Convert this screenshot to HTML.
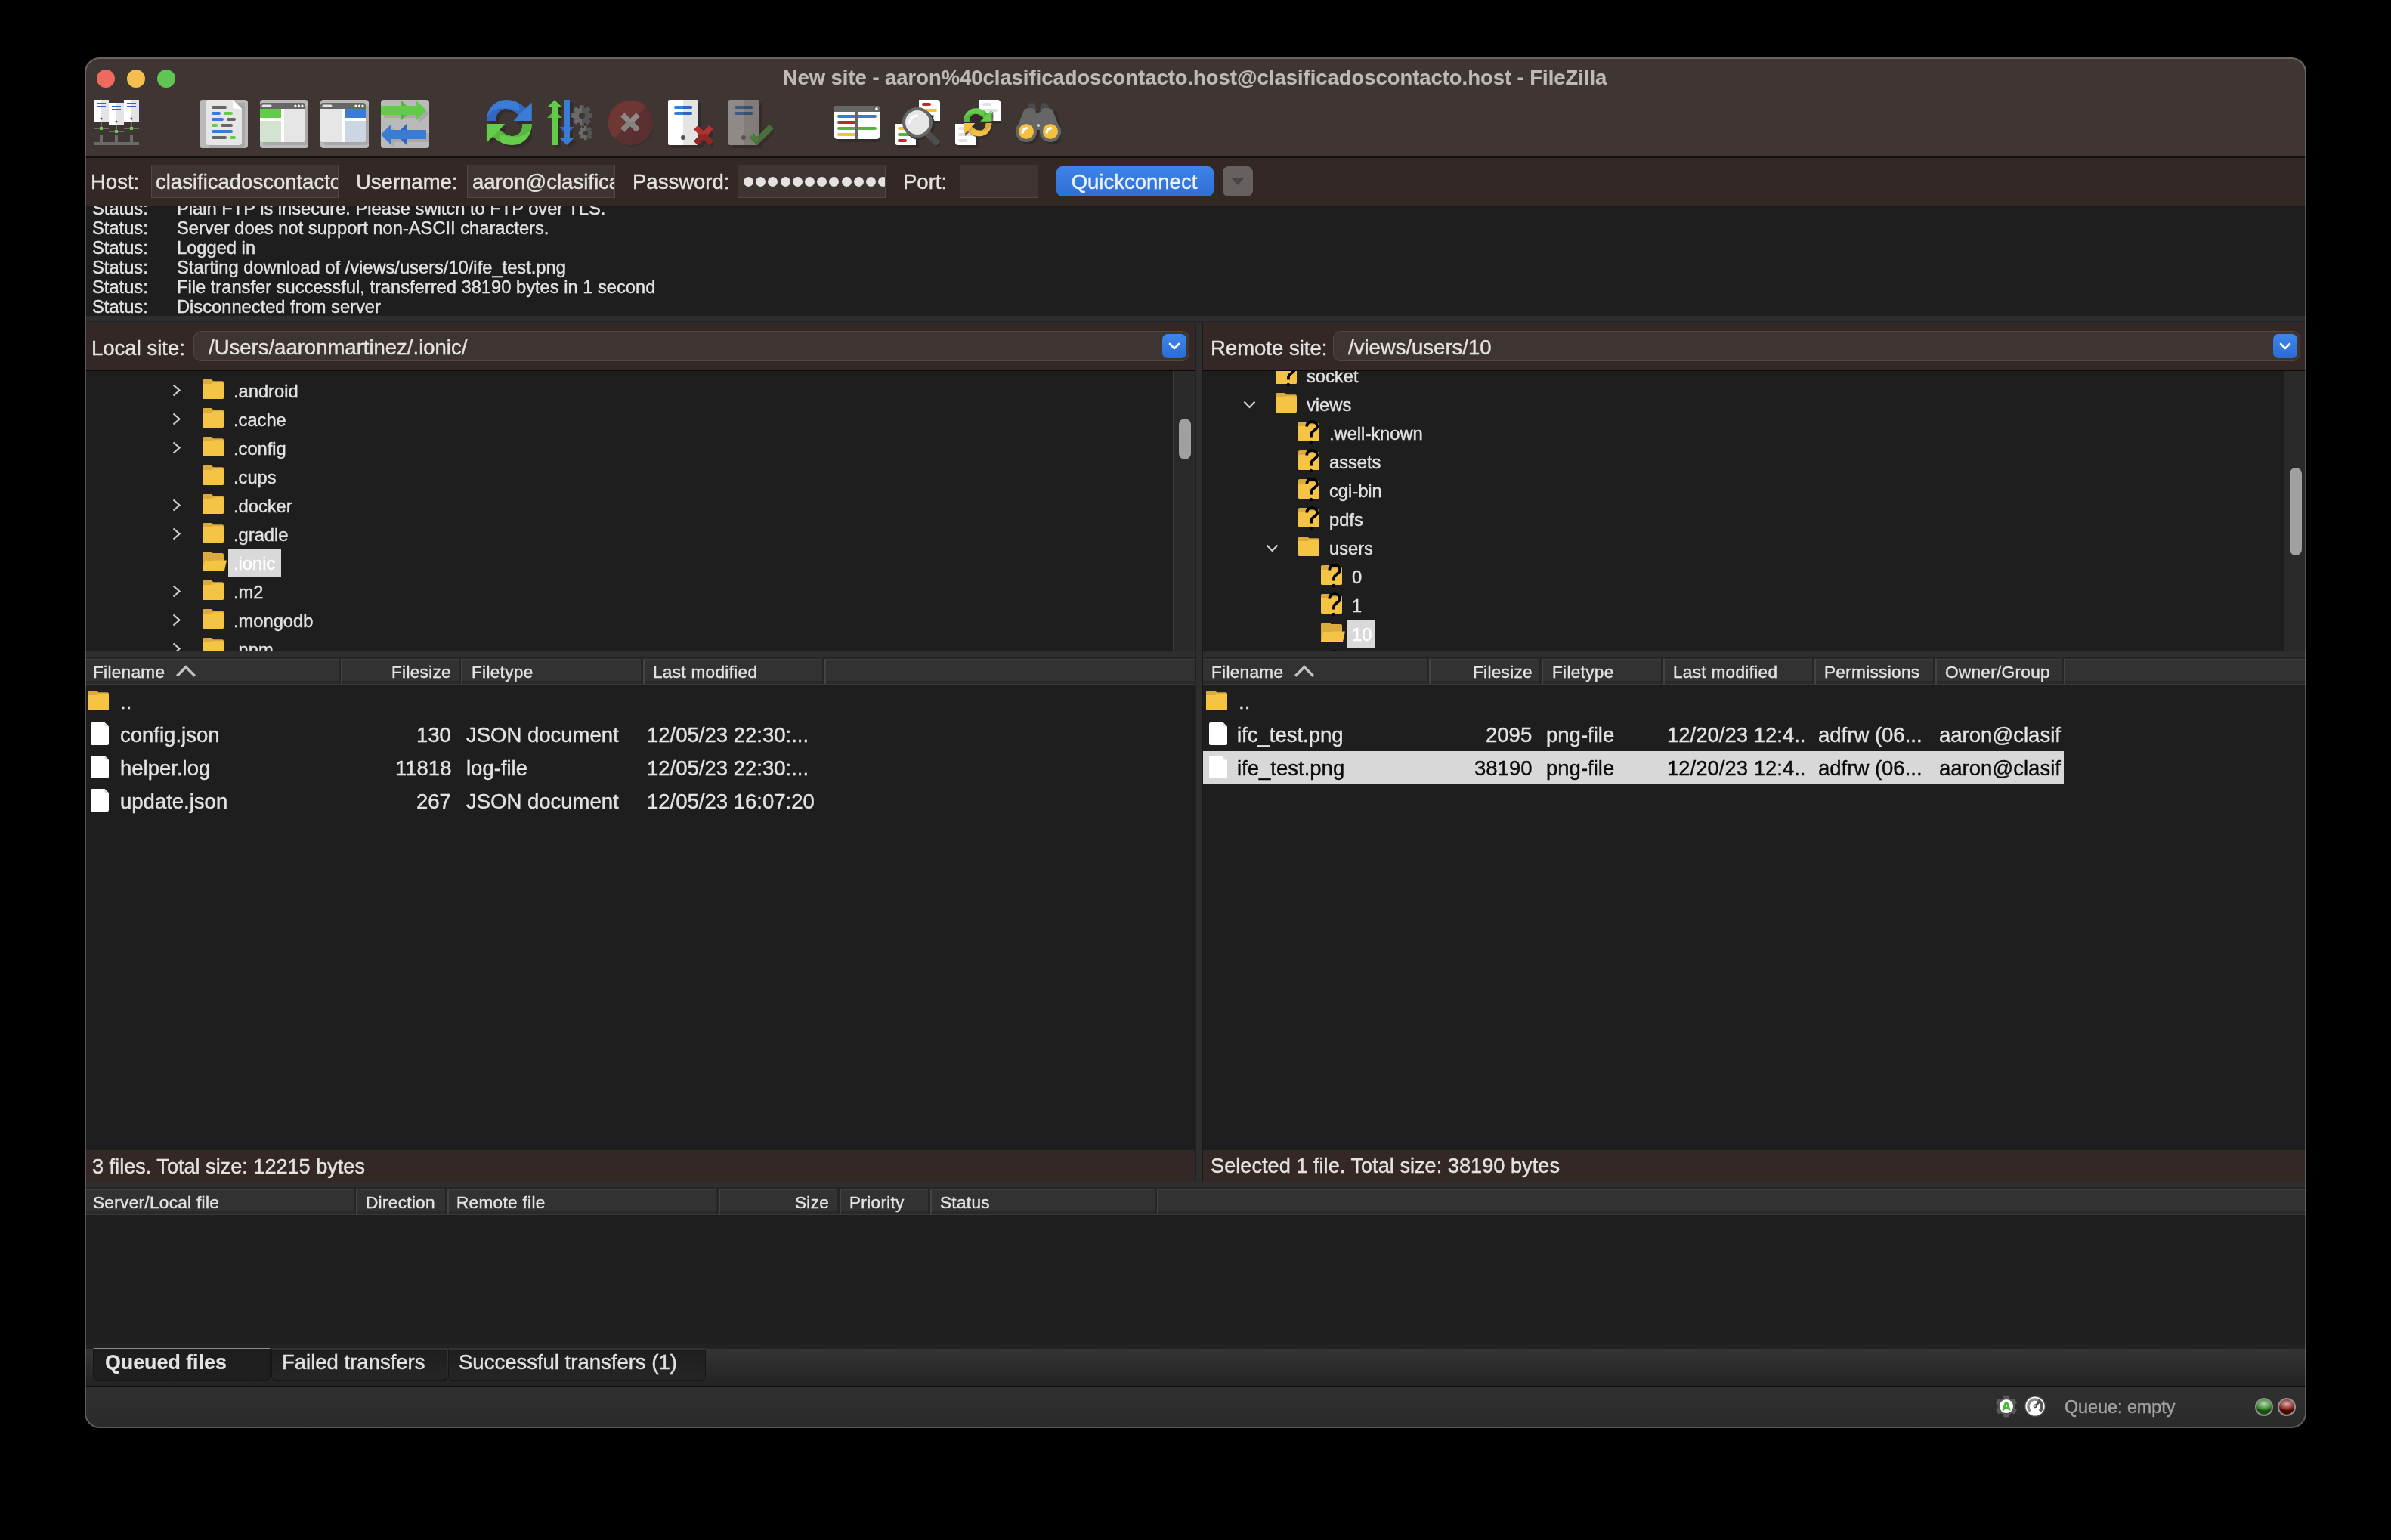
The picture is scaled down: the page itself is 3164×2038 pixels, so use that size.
<!DOCTYPE html>
<html><head><meta charset="utf-8"><style>
html,body{margin:0;padding:0;background:#000;width:3164px;height:2038px;overflow:hidden;font-family:'Liberation Sans', sans-serif;}
</style></head><body>
<div id="win" style="position:absolute;left:0;top:0;width:3164px;height:2038px;clip-path:inset(76px 112px 148px 112px round 20px);"><div style="position:absolute;left:112px;top:76px;width:2940px;height:132px;background:#3f3634;"></div><div style="position:absolute;left:112px;top:207px;width:2940px;height:2px;background:#121010;"></div><div style="position:absolute;left:112px;top:209px;width:2940px;height:63px;background:#332826;"></div><div style="position:absolute;left:112px;top:272px;width:2940px;height:146px;background:#1e1e1e;"></div><div style="position:absolute;left:112px;top:418px;width:2940px;height:10px;background:#2e2e2e;"></div><div style="position:absolute;left:112px;top:425px;width:2940px;height:3px;background:#262626;"></div><div style="position:absolute;left:112px;top:428px;width:1469px;height:61px;background:#332826;"></div><div style="position:absolute;left:1592px;top:428px;width:1460px;height:61px;background:#332826;"></div><div style="position:absolute;left:112px;top:489px;width:1469px;height:2px;background:#0a0a0a;"></div><div style="position:absolute;left:1592px;top:489px;width:1460px;height:2px;background:#0a0a0a;"></div><div style="position:absolute;left:112px;top:491px;width:1469px;height:371px;background:#1e1e1e;"></div><div style="position:absolute;left:1592px;top:491px;width:1460px;height:371px;background:#1e1e1e;"></div><div style="position:absolute;left:112px;top:862px;width:1469px;height:10px;background:#2e2e2e;"></div><div style="position:absolute;left:1592px;top:862px;width:1460px;height:10px;background:#2e2e2e;"></div><div style="position:absolute;left:112px;top:869px;width:1469px;height:3px;background:#262626;"></div><div style="position:absolute;left:1592px;top:869px;width:1460px;height:3px;background:#262626;"></div><div style="position:absolute;left:112px;top:872px;width:1469px;height:34px;background:#323232;"></div><div style="position:absolute;left:1592px;top:872px;width:1460px;height:34px;background:#323232;"></div><div style="position:absolute;left:112px;top:906px;width:1469px;height:616px;background:#1e1e1e;"></div><div style="position:absolute;left:1592px;top:906px;width:1460px;height:616px;background:#1e1e1e;"></div><div style="position:absolute;left:112px;top:1522px;width:1469px;height:42px;background:#332826;"></div><div style="position:absolute;left:1592px;top:1522px;width:1460px;height:42px;background:#332826;"></div><div style="position:absolute;left:1581px;top:427px;width:11px;height:1137px;background:#2e2e2e;"></div><div style="position:absolute;left:1581px;top:427px;width:2px;height:1137px;background:#222;"></div><div style="position:absolute;left:1590px;top:427px;width:2px;height:1137px;background:#1a1a1a;"></div><div style="position:absolute;left:112px;top:1564px;width:2940px;height:10px;background:#2e2e2e;"></div><div style="position:absolute;left:112px;top:1571px;width:2940px;height:3px;background:#262626;"></div><div style="position:absolute;left:112px;top:1574px;width:2940px;height:34px;background:#323232;"></div><div style="position:absolute;left:112px;top:1608px;width:2940px;height:171px;background:#1e1e1e;"></div><div style="position:absolute;left:112px;top:1779px;width:2940px;height:6px;background:#222222;"></div><div style="position:absolute;left:112px;top:1785px;width:2940px;height:50px;background:linear-gradient(#353535,#222222);"></div><div style="position:absolute;left:112px;top:1835px;width:2940px;height:55px;background:linear-gradient(#303030,#2a2a2a);"></div><div style="position:absolute;left:112px;top:1834px;width:2940px;height:2px;background:#0e0e0e;"></div><div style="position:absolute;left:581px;width:2000px;text-align:center;top:103.41px;font-size:27.4px;font-weight:700;color:#c0b9b6;letter-spacing:0px;line-height:0;white-space:pre;will-change:transform;-webkit-text-stroke-width:0.15px;">New site - aaron%40clasificadoscontacto.host@clasificadoscontacto.host - FileZilla</div><div style="position:absolute;left:128px;top:92px;width:24px;height:24px;border-radius:50%;background:#ee6a5f"></div><div style="position:absolute;left:168px;top:92px;width:24px;height:24px;border-radius:50%;background:#f5bf4f"></div><div style="position:absolute;left:208px;top:92px;width:24px;height:24px;border-radius:50%;background:#61c554"></div><div style="position:absolute;left:120px;top:241.38px;font-size:27.5px;font-weight:400;color:#e5e3e1;letter-spacing:0px;line-height:0;white-space:pre;will-change:transform;-webkit-text-stroke-width:0.4px;">Host:</div><div style="position:absolute;left:200px;top:218px;width:246px;height:42px;background:#3e3533;border:1px solid #4f4745;border-radius:0px"></div><div style="position:absolute;left:201px;top:219px;width:246px;height:42px;overflow:hidden"><div style="position:absolute;left:4.6px;top:22.38px;font-size:27.5px;font-weight:400;color:#e5e3e1;letter-spacing:0px;line-height:0;white-space:pre;will-change:transform;-webkit-text-stroke-width:0.4px;">clasificadoscontacto.host</div></div><div style="position:absolute;left:471px;top:241.38px;font-size:27.5px;font-weight:400;color:#e5e3e1;letter-spacing:0px;line-height:0;white-space:pre;will-change:transform;-webkit-text-stroke-width:0.4px;">Username:</div><div style="position:absolute;left:618px;top:218px;width:194px;height:42px;background:#3e3533;border:1px solid #4f4745;border-radius:0px"></div><div style="position:absolute;left:619px;top:219px;width:194px;height:42px;overflow:hidden"><div style="position:absolute;left:6px;top:22.38px;font-size:27.5px;font-weight:400;color:#e5e3e1;letter-spacing:0px;line-height:0;white-space:pre;will-change:transform;-webkit-text-stroke-width:0.4px;">aaron@clasificadoscontacto.host</div></div><div style="position:absolute;left:837px;top:241.38px;font-size:27.5px;font-weight:400;color:#e5e3e1;letter-spacing:0px;line-height:0;white-space:pre;will-change:transform;-webkit-text-stroke-width:0.4px;">Password:</div><div style="position:absolute;left:976px;top:218px;width:194px;height:42px;background:#3e3533;border:1px solid #4f4745;border-radius:0px"></div><div style="position:absolute;left:977px;top:219px;width:194px;height:42px;overflow:hidden"><div style="position:absolute;left:7.0px;top:15px;width:13px;height:13px;border-radius:50%;background:#e5e3e1"></div><div style="position:absolute;left:23.2px;top:15px;width:13px;height:13px;border-radius:50%;background:#e5e3e1"></div><div style="position:absolute;left:39.4px;top:15px;width:13px;height:13px;border-radius:50%;background:#e5e3e1"></div><div style="position:absolute;left:55.6px;top:15px;width:13px;height:13px;border-radius:50%;background:#e5e3e1"></div><div style="position:absolute;left:71.8px;top:15px;width:13px;height:13px;border-radius:50%;background:#e5e3e1"></div><div style="position:absolute;left:88.0px;top:15px;width:13px;height:13px;border-radius:50%;background:#e5e3e1"></div><div style="position:absolute;left:104.2px;top:15px;width:13px;height:13px;border-radius:50%;background:#e5e3e1"></div><div style="position:absolute;left:120.4px;top:15px;width:13px;height:13px;border-radius:50%;background:#e5e3e1"></div><div style="position:absolute;left:136.6px;top:15px;width:13px;height:13px;border-radius:50%;background:#e5e3e1"></div><div style="position:absolute;left:152.8px;top:15px;width:13px;height:13px;border-radius:50%;background:#e5e3e1"></div><div style="position:absolute;left:169.0px;top:15px;width:13px;height:13px;border-radius:50%;background:#e5e3e1"></div><div style="position:absolute;left:185.2px;top:15px;width:13px;height:13px;border-radius:50%;background:#e5e3e1"></div><div style="position:absolute;left:201.4px;top:15px;width:13px;height:13px;border-radius:50%;background:#e5e3e1"></div></div><div style="position:absolute;left:1195px;top:241.38px;font-size:27.5px;font-weight:400;color:#e5e3e1;letter-spacing:0px;line-height:0;white-space:pre;will-change:transform;-webkit-text-stroke-width:0.4px;">Port:</div><div style="position:absolute;left:1270px;top:218px;width:102px;height:42px;background:#3e3533;border:1px solid #4f4745;border-radius:0px"></div><div style="position:absolute;left:1398px;top:220px;width:208px;height:40px;border-radius:8px;background:linear-gradient(#3d83e8,#2f6fd6);"></div><div style="position:absolute;left:501px;width:2000px;text-align:center;top:241.38px;font-size:27.5px;font-weight:400;color:#eef2fa;letter-spacing:0px;line-height:0;white-space:pre;will-change:transform;-webkit-text-stroke-width:0.4px;">Quickconnect</div><div style="position:absolute;left:1618px;top:220px;width:40px;height:40px;border-radius:8px;background:#66615e;"></div><svg style="position:absolute;left:1628px;top:234px" width="20" height="12" viewBox="0 0 20 12"><path d="M1,1 L19,1 L10,11 Z" fill="#484544"/></svg><div style="position:absolute;left:0;top:272px;width:3164px;height:146px;overflow:hidden"><div style="position:absolute;left:122px;top:3.71px;font-size:23.7px;font-weight:400;color:#e3e3e3;letter-spacing:0px;line-height:0;white-space:pre;will-change:transform;-webkit-text-stroke-width:0.4px;">Status:</div><div style="position:absolute;left:234px;top:3.71px;font-size:23.7px;font-weight:400;color:#e3e3e3;letter-spacing:0px;line-height:0;white-space:pre;will-change:transform;-webkit-text-stroke-width:0.4px;">Plain FTP is insecure. Please switch to FTP over TLS.</div><div style="position:absolute;left:122px;top:29.70px;font-size:23.7px;font-weight:400;color:#e3e3e3;letter-spacing:0px;line-height:0;white-space:pre;will-change:transform;-webkit-text-stroke-width:0.4px;">Status:</div><div style="position:absolute;left:234px;top:29.70px;font-size:23.7px;font-weight:400;color:#e3e3e3;letter-spacing:0px;line-height:0;white-space:pre;will-change:transform;-webkit-text-stroke-width:0.4px;">Server does not support non-ASCII characters.</div><div style="position:absolute;left:122px;top:55.70px;font-size:23.7px;font-weight:400;color:#e3e3e3;letter-spacing:0px;line-height:0;white-space:pre;will-change:transform;-webkit-text-stroke-width:0.4px;">Status:</div><div style="position:absolute;left:234px;top:55.70px;font-size:23.7px;font-weight:400;color:#e3e3e3;letter-spacing:0px;line-height:0;white-space:pre;will-change:transform;-webkit-text-stroke-width:0.4px;">Logged in</div><div style="position:absolute;left:122px;top:81.70px;font-size:23.7px;font-weight:400;color:#e3e3e3;letter-spacing:0px;line-height:0;white-space:pre;will-change:transform;-webkit-text-stroke-width:0.4px;">Status:</div><div style="position:absolute;left:234px;top:81.70px;font-size:23.7px;font-weight:400;color:#e3e3e3;letter-spacing:0px;line-height:0;white-space:pre;will-change:transform;-webkit-text-stroke-width:0.4px;">Starting download of /views/users/10/ife_test.png</div><div style="position:absolute;left:122px;top:107.70px;font-size:23.7px;font-weight:400;color:#e3e3e3;letter-spacing:0px;line-height:0;white-space:pre;will-change:transform;-webkit-text-stroke-width:0.4px;">Status:</div><div style="position:absolute;left:234px;top:107.70px;font-size:23.7px;font-weight:400;color:#e3e3e3;letter-spacing:0px;line-height:0;white-space:pre;will-change:transform;-webkit-text-stroke-width:0.4px;">File transfer successful, transferred 38190 bytes in 1 second</div><div style="position:absolute;left:122px;top:133.71px;font-size:23.7px;font-weight:400;color:#e3e3e3;letter-spacing:0px;line-height:0;white-space:pre;will-change:transform;-webkit-text-stroke-width:0.4px;">Status:</div><div style="position:absolute;left:234px;top:133.71px;font-size:23.7px;font-weight:400;color:#e3e3e3;letter-spacing:0px;line-height:0;white-space:pre;will-change:transform;-webkit-text-stroke-width:0.4px;">Disconnected from server</div></div><div style="position:absolute;left:121px;top:460.88px;font-size:27.5px;font-weight:400;color:#e5e3e1;letter-spacing:0px;line-height:0;white-space:pre;will-change:transform;-webkit-text-stroke-width:0.4px;">Local site:</div><div style="position:absolute;left:256px;top:438px;width:1316px;height:38px;background:#3e3533;border:1px solid #4f4745;border-radius:10px"></div><div style="position:absolute;left:276px;top:459.57px;font-size:27.5px;font-weight:400;color:#e5e3e1;letter-spacing:0px;line-height:0;white-space:pre;will-change:transform;-webkit-text-stroke-width:0.4px;">/Users/aaronmartinez/.ionic/</div><div style="position:absolute;left:1538px;top:442px;width:32px;height:32px;border-radius:7px;background:linear-gradient(#3f86ea,#2d6bd2)"></div><svg style="position:absolute;left:1546px;top:453px" width="16" height="10" viewBox="0 0 16 10"><path d="M2,2 L8,8 L14,2" stroke="#fff" stroke-width="2.6" fill="none" stroke-linecap="round" stroke-linejoin="round"/></svg><div style="position:absolute;left:1602px;top:460.88px;font-size:27.5px;font-weight:400;color:#e5e3e1;letter-spacing:0px;line-height:0;white-space:pre;will-change:transform;-webkit-text-stroke-width:0.4px;">Remote site:</div><div style="position:absolute;left:1764px;top:438px;width:1278px;height:38px;background:#3e3533;border:1px solid #4f4745;border-radius:10px"></div><div style="position:absolute;left:1784px;top:459.57px;font-size:27.5px;font-weight:400;color:#e5e3e1;letter-spacing:0px;line-height:0;white-space:pre;will-change:transform;-webkit-text-stroke-width:0.4px;">/views/users/10</div><div style="position:absolute;left:3008px;top:442px;width:32px;height:32px;border-radius:7px;background:linear-gradient(#3f86ea,#2d6bd2)"></div><svg style="position:absolute;left:3016px;top:453px" width="16" height="10" viewBox="0 0 16 10"><path d="M2,2 L8,8 L14,2" stroke="#fff" stroke-width="2.6" fill="none" stroke-linecap="round" stroke-linejoin="round"/></svg><div style="position:absolute;left:112px;top:491px;width:1440px;height:371px;overflow:hidden"><svg style="position:absolute;left:116px;top:17px" width="12" height="18" viewBox="0 0 12 18"><path d="M1.5,1.5 L9.5,8.5 L1.5,15.5" stroke="#d0d0d0" stroke-width="2.2" fill="none"/></svg><svg style="position:absolute;left:156px;top:11px" width="32" height="26" viewBox="0 0 32 26"><path d="M0,2 Q0,0 2,0 L11.5,0 L14.5,2.2 L26,2.2 Q28,2.2 28,4.2 L28,24 Q28,26 26,26 L2,26 Q0,26 0,24 Z" fill="#dcab3d"/><path d="M0,6 L11.5,6 L14.5,4.2 L26,4.2 Q28,4.2 28,6.2 L28,24 Q28,26 26,26 L2,26 Q0,26 0,24 Z" fill="#f5c445"/></svg><div style="position:absolute;left:197px;top:26.70px;font-size:23.7px;font-weight:400;color:#e3e3e3;letter-spacing:0px;line-height:0;white-space:pre;will-change:transform;-webkit-text-stroke-width:0.4px;">.android</div><svg style="position:absolute;left:116px;top:55px" width="12" height="18" viewBox="0 0 12 18"><path d="M1.5,1.5 L9.5,8.5 L1.5,15.5" stroke="#d0d0d0" stroke-width="2.2" fill="none"/></svg><svg style="position:absolute;left:156px;top:49px" width="32" height="26" viewBox="0 0 32 26"><path d="M0,2 Q0,0 2,0 L11.5,0 L14.5,2.2 L26,2.2 Q28,2.2 28,4.2 L28,24 Q28,26 26,26 L2,26 Q0,26 0,24 Z" fill="#dcab3d"/><path d="M0,6 L11.5,6 L14.5,4.2 L26,4.2 Q28,4.2 28,6.2 L28,24 Q28,26 26,26 L2,26 Q0,26 0,24 Z" fill="#f5c445"/></svg><div style="position:absolute;left:197px;top:64.70px;font-size:23.7px;font-weight:400;color:#e3e3e3;letter-spacing:0px;line-height:0;white-space:pre;will-change:transform;-webkit-text-stroke-width:0.4px;">.cache</div><svg style="position:absolute;left:116px;top:93px" width="12" height="18" viewBox="0 0 12 18"><path d="M1.5,1.5 L9.5,8.5 L1.5,15.5" stroke="#d0d0d0" stroke-width="2.2" fill="none"/></svg><svg style="position:absolute;left:156px;top:87px" width="32" height="26" viewBox="0 0 32 26"><path d="M0,2 Q0,0 2,0 L11.5,0 L14.5,2.2 L26,2.2 Q28,2.2 28,4.2 L28,24 Q28,26 26,26 L2,26 Q0,26 0,24 Z" fill="#dcab3d"/><path d="M0,6 L11.5,6 L14.5,4.2 L26,4.2 Q28,4.2 28,6.2 L28,24 Q28,26 26,26 L2,26 Q0,26 0,24 Z" fill="#f5c445"/></svg><div style="position:absolute;left:197px;top:102.70px;font-size:23.7px;font-weight:400;color:#e3e3e3;letter-spacing:0px;line-height:0;white-space:pre;will-change:transform;-webkit-text-stroke-width:0.4px;">.config</div><svg style="position:absolute;left:156px;top:125px" width="32" height="26" viewBox="0 0 32 26"><path d="M0,2 Q0,0 2,0 L11.5,0 L14.5,2.2 L26,2.2 Q28,2.2 28,4.2 L28,24 Q28,26 26,26 L2,26 Q0,26 0,24 Z" fill="#dcab3d"/><path d="M0,6 L11.5,6 L14.5,4.2 L26,4.2 Q28,4.2 28,6.2 L28,24 Q28,26 26,26 L2,26 Q0,26 0,24 Z" fill="#f5c445"/></svg><div style="position:absolute;left:197px;top:140.71px;font-size:23.7px;font-weight:400;color:#e3e3e3;letter-spacing:0px;line-height:0;white-space:pre;will-change:transform;-webkit-text-stroke-width:0.4px;">.cups</div><svg style="position:absolute;left:116px;top:169px" width="12" height="18" viewBox="0 0 12 18"><path d="M1.5,1.5 L9.5,8.5 L1.5,15.5" stroke="#d0d0d0" stroke-width="2.2" fill="none"/></svg><svg style="position:absolute;left:156px;top:163px" width="32" height="26" viewBox="0 0 32 26"><path d="M0,2 Q0,0 2,0 L11.5,0 L14.5,2.2 L26,2.2 Q28,2.2 28,4.2 L28,24 Q28,26 26,26 L2,26 Q0,26 0,24 Z" fill="#dcab3d"/><path d="M0,6 L11.5,6 L14.5,4.2 L26,4.2 Q28,4.2 28,6.2 L28,24 Q28,26 26,26 L2,26 Q0,26 0,24 Z" fill="#f5c445"/></svg><div style="position:absolute;left:197px;top:178.71px;font-size:23.7px;font-weight:400;color:#e3e3e3;letter-spacing:0px;line-height:0;white-space:pre;will-change:transform;-webkit-text-stroke-width:0.4px;">.docker</div><svg style="position:absolute;left:116px;top:207px" width="12" height="18" viewBox="0 0 12 18"><path d="M1.5,1.5 L9.5,8.5 L1.5,15.5" stroke="#d0d0d0" stroke-width="2.2" fill="none"/></svg><svg style="position:absolute;left:156px;top:201px" width="32" height="26" viewBox="0 0 32 26"><path d="M0,2 Q0,0 2,0 L11.5,0 L14.5,2.2 L26,2.2 Q28,2.2 28,4.2 L28,24 Q28,26 26,26 L2,26 Q0,26 0,24 Z" fill="#dcab3d"/><path d="M0,6 L11.5,6 L14.5,4.2 L26,4.2 Q28,4.2 28,6.2 L28,24 Q28,26 26,26 L2,26 Q0,26 0,24 Z" fill="#f5c445"/></svg><div style="position:absolute;left:197px;top:216.71px;font-size:23.7px;font-weight:400;color:#e3e3e3;letter-spacing:0px;line-height:0;white-space:pre;will-change:transform;-webkit-text-stroke-width:0.4px;">.gradle</div><svg style="position:absolute;left:156px;top:239px" width="32" height="26" viewBox="0 0 32 26"><path d="M0,2 Q0,0 2,0 L11.5,0 L13.5,2 L26,2 Q28,2 28,4 L28,24 L2,26 Q0,26 0,24 Z" fill="#dcab3d"/><path d="M2.5,14 Q3,12.5 5,12.5 L12,12.5 L15,11.5 L32,11.5 L29,25 Q28.5,26 27,26 L2,26 Q0,26 0,24 Z" fill="#f5c445"/></svg><div style="position:absolute;left:190px;top:235px;width:70px;height:38px;background:#d9d9d9"></div><div style="position:absolute;left:197px;top:254.71px;font-size:23.7px;font-weight:400;color:#ffffff;letter-spacing:0px;line-height:0;white-space:pre;will-change:transform;-webkit-text-stroke-width:0.4px;">.ionic</div><svg style="position:absolute;left:116px;top:283px" width="12" height="18" viewBox="0 0 12 18"><path d="M1.5,1.5 L9.5,8.5 L1.5,15.5" stroke="#d0d0d0" stroke-width="2.2" fill="none"/></svg><svg style="position:absolute;left:156px;top:277px" width="32" height="26" viewBox="0 0 32 26"><path d="M0,2 Q0,0 2,0 L11.5,0 L14.5,2.2 L26,2.2 Q28,2.2 28,4.2 L28,24 Q28,26 26,26 L2,26 Q0,26 0,24 Z" fill="#dcab3d"/><path d="M0,6 L11.5,6 L14.5,4.2 L26,4.2 Q28,4.2 28,6.2 L28,24 Q28,26 26,26 L2,26 Q0,26 0,24 Z" fill="#f5c445"/></svg><div style="position:absolute;left:197px;top:292.70px;font-size:23.7px;font-weight:400;color:#e3e3e3;letter-spacing:0px;line-height:0;white-space:pre;will-change:transform;-webkit-text-stroke-width:0.4px;">.m2</div><svg style="position:absolute;left:116px;top:321px" width="12" height="18" viewBox="0 0 12 18"><path d="M1.5,1.5 L9.5,8.5 L1.5,15.5" stroke="#d0d0d0" stroke-width="2.2" fill="none"/></svg><svg style="position:absolute;left:156px;top:315px" width="32" height="26" viewBox="0 0 32 26"><path d="M0,2 Q0,0 2,0 L11.5,0 L14.5,2.2 L26,2.2 Q28,2.2 28,4.2 L28,24 Q28,26 26,26 L2,26 Q0,26 0,24 Z" fill="#dcab3d"/><path d="M0,6 L11.5,6 L14.5,4.2 L26,4.2 Q28,4.2 28,6.2 L28,24 Q28,26 26,26 L2,26 Q0,26 0,24 Z" fill="#f5c445"/></svg><div style="position:absolute;left:197px;top:330.70px;font-size:23.7px;font-weight:400;color:#e3e3e3;letter-spacing:0px;line-height:0;white-space:pre;will-change:transform;-webkit-text-stroke-width:0.4px;">.mongodb</div><svg style="position:absolute;left:116px;top:359px" width="12" height="18" viewBox="0 0 12 18"><path d="M1.5,1.5 L9.5,8.5 L1.5,15.5" stroke="#d0d0d0" stroke-width="2.2" fill="none"/></svg><svg style="position:absolute;left:156px;top:353px" width="32" height="26" viewBox="0 0 32 26"><path d="M0,2 Q0,0 2,0 L11.5,0 L14.5,2.2 L26,2.2 Q28,2.2 28,4.2 L28,24 Q28,26 26,26 L2,26 Q0,26 0,24 Z" fill="#dcab3d"/><path d="M0,6 L11.5,6 L14.5,4.2 L26,4.2 Q28,4.2 28,6.2 L28,24 Q28,26 26,26 L2,26 Q0,26 0,24 Z" fill="#f5c445"/></svg><div style="position:absolute;left:197px;top:368.70px;font-size:23.7px;font-weight:400;color:#e3e3e3;letter-spacing:0px;line-height:0;white-space:pre;will-change:transform;-webkit-text-stroke-width:0.4px;">.npm</div></div><div style="position:absolute;left:1552px;top:491px;width:29px;height:371px;background:#2a2a2a;border-left:1px solid #3a3a3a;box-sizing:border-box"></div><div style="position:absolute;left:1560px;top:554px;width:16px;height:54px;border-radius:8px;background:#a0a0a0"></div><div style="position:absolute;left:1592px;top:491px;width:1430px;height:371px;overflow:hidden"><svg style="position:absolute;left:96px;top:-9px" width="32" height="26" viewBox="0 0 32 26"><path d="M0,2 Q0,0 2,0 L11.5,0 L14.5,2.2 L26,2.2 Q28,2.2 28,4.2 L28,24 Q28,26 26,26 L2,26 Q0,26 0,24 Z" fill="#dcab3d"/><path d="M0,6 L11.5,6 L14.5,4.2 L26,4.2 Q28,4.2 28,6.2 L28,24 Q28,26 26,26 L2,26 Q0,26 0,24 Z" fill="#f5c445"/></svg><svg style="position:absolute;left:96px;top:-11px" width="30" height="32" viewBox="0 0 30 32"><path d="M11.3,8.5 C11.3,4 14.2,2.2 18,2.2 C22.2,2.2 25.2,4.8 25.2,8.5 C25.2,13.2 17,14.2 17,19 L17,22.5" stroke="#000" stroke-width="3.8" fill="none"/><circle cx="16.8" cy="29" r="2.2" fill="#000"/></svg><div style="position:absolute;left:137px;top:6.71px;font-size:23.7px;font-weight:400;color:#e3e3e3;letter-spacing:0px;line-height:0;white-space:pre;will-change:transform;-webkit-text-stroke-width:0.4px;">socket</div><svg style="position:absolute;left:53px;top:39px" width="18" height="12" viewBox="0 0 18 12"><path d="M1.5,1.5 L8.5,9 L15.5,1.5" stroke="#d0d0d0" stroke-width="2.2" fill="none"/></svg><svg style="position:absolute;left:96px;top:29px" width="32" height="26" viewBox="0 0 32 26"><path d="M0,2 Q0,0 2,0 L11.5,0 L14.5,2.2 L26,2.2 Q28,2.2 28,4.2 L28,24 Q28,26 26,26 L2,26 Q0,26 0,24 Z" fill="#dcab3d"/><path d="M0,6 L11.5,6 L14.5,4.2 L26,4.2 Q28,4.2 28,6.2 L28,24 Q28,26 26,26 L2,26 Q0,26 0,24 Z" fill="#f5c445"/></svg><div style="position:absolute;left:137px;top:44.70px;font-size:23.7px;font-weight:400;color:#e3e3e3;letter-spacing:0px;line-height:0;white-space:pre;will-change:transform;-webkit-text-stroke-width:0.4px;">views</div><svg style="position:absolute;left:126px;top:67px" width="32" height="26" viewBox="0 0 32 26"><path d="M0,2 Q0,0 2,0 L11.5,0 L14.5,2.2 L26,2.2 Q28,2.2 28,4.2 L28,24 Q28,26 26,26 L2,26 Q0,26 0,24 Z" fill="#dcab3d"/><path d="M0,6 L11.5,6 L14.5,4.2 L26,4.2 Q28,4.2 28,6.2 L28,24 Q28,26 26,26 L2,26 Q0,26 0,24 Z" fill="#f5c445"/></svg><svg style="position:absolute;left:126px;top:65px" width="30" height="32" viewBox="0 0 30 32"><path d="M11.3,8.5 C11.3,4 14.2,2.2 18,2.2 C22.2,2.2 25.2,4.8 25.2,8.5 C25.2,13.2 17,14.2 17,19 L17,22.5" stroke="#000" stroke-width="3.8" fill="none"/><circle cx="16.8" cy="29" r="2.2" fill="#000"/></svg><div style="position:absolute;left:167px;top:82.70px;font-size:23.7px;font-weight:400;color:#e3e3e3;letter-spacing:0px;line-height:0;white-space:pre;will-change:transform;-webkit-text-stroke-width:0.4px;">.well-known</div><svg style="position:absolute;left:126px;top:105px" width="32" height="26" viewBox="0 0 32 26"><path d="M0,2 Q0,0 2,0 L11.5,0 L14.5,2.2 L26,2.2 Q28,2.2 28,4.2 L28,24 Q28,26 26,26 L2,26 Q0,26 0,24 Z" fill="#dcab3d"/><path d="M0,6 L11.5,6 L14.5,4.2 L26,4.2 Q28,4.2 28,6.2 L28,24 Q28,26 26,26 L2,26 Q0,26 0,24 Z" fill="#f5c445"/></svg><svg style="position:absolute;left:126px;top:103px" width="30" height="32" viewBox="0 0 30 32"><path d="M11.3,8.5 C11.3,4 14.2,2.2 18,2.2 C22.2,2.2 25.2,4.8 25.2,8.5 C25.2,13.2 17,14.2 17,19 L17,22.5" stroke="#000" stroke-width="3.8" fill="none"/><circle cx="16.8" cy="29" r="2.2" fill="#000"/></svg><div style="position:absolute;left:167px;top:120.70px;font-size:23.7px;font-weight:400;color:#e3e3e3;letter-spacing:0px;line-height:0;white-space:pre;will-change:transform;-webkit-text-stroke-width:0.4px;">assets</div><svg style="position:absolute;left:126px;top:143px" width="32" height="26" viewBox="0 0 32 26"><path d="M0,2 Q0,0 2,0 L11.5,0 L14.5,2.2 L26,2.2 Q28,2.2 28,4.2 L28,24 Q28,26 26,26 L2,26 Q0,26 0,24 Z" fill="#dcab3d"/><path d="M0,6 L11.5,6 L14.5,4.2 L26,4.2 Q28,4.2 28,6.2 L28,24 Q28,26 26,26 L2,26 Q0,26 0,24 Z" fill="#f5c445"/></svg><svg style="position:absolute;left:126px;top:141px" width="30" height="32" viewBox="0 0 30 32"><path d="M11.3,8.5 C11.3,4 14.2,2.2 18,2.2 C22.2,2.2 25.2,4.8 25.2,8.5 C25.2,13.2 17,14.2 17,19 L17,22.5" stroke="#000" stroke-width="3.8" fill="none"/><circle cx="16.8" cy="29" r="2.2" fill="#000"/></svg><div style="position:absolute;left:167px;top:158.71px;font-size:23.7px;font-weight:400;color:#e3e3e3;letter-spacing:0px;line-height:0;white-space:pre;will-change:transform;-webkit-text-stroke-width:0.4px;">cgi-bin</div><svg style="position:absolute;left:126px;top:181px" width="32" height="26" viewBox="0 0 32 26"><path d="M0,2 Q0,0 2,0 L11.5,0 L14.5,2.2 L26,2.2 Q28,2.2 28,4.2 L28,24 Q28,26 26,26 L2,26 Q0,26 0,24 Z" fill="#dcab3d"/><path d="M0,6 L11.5,6 L14.5,4.2 L26,4.2 Q28,4.2 28,6.2 L28,24 Q28,26 26,26 L2,26 Q0,26 0,24 Z" fill="#f5c445"/></svg><svg style="position:absolute;left:126px;top:179px" width="30" height="32" viewBox="0 0 30 32"><path d="M11.3,8.5 C11.3,4 14.2,2.2 18,2.2 C22.2,2.2 25.2,4.8 25.2,8.5 C25.2,13.2 17,14.2 17,19 L17,22.5" stroke="#000" stroke-width="3.8" fill="none"/><circle cx="16.8" cy="29" r="2.2" fill="#000"/></svg><div style="position:absolute;left:167px;top:196.71px;font-size:23.7px;font-weight:400;color:#e3e3e3;letter-spacing:0px;line-height:0;white-space:pre;will-change:transform;-webkit-text-stroke-width:0.4px;">pdfs</div><svg style="position:absolute;left:83px;top:229px" width="18" height="12" viewBox="0 0 18 12"><path d="M1.5,1.5 L8.5,9 L15.5,1.5" stroke="#d0d0d0" stroke-width="2.2" fill="none"/></svg><svg style="position:absolute;left:126px;top:219px" width="32" height="26" viewBox="0 0 32 26"><path d="M0,2 Q0,0 2,0 L11.5,0 L14.5,2.2 L26,2.2 Q28,2.2 28,4.2 L28,24 Q28,26 26,26 L2,26 Q0,26 0,24 Z" fill="#dcab3d"/><path d="M0,6 L11.5,6 L14.5,4.2 L26,4.2 Q28,4.2 28,6.2 L28,24 Q28,26 26,26 L2,26 Q0,26 0,24 Z" fill="#f5c445"/></svg><div style="position:absolute;left:167px;top:234.71px;font-size:23.7px;font-weight:400;color:#e3e3e3;letter-spacing:0px;line-height:0;white-space:pre;will-change:transform;-webkit-text-stroke-width:0.4px;">users</div><svg style="position:absolute;left:156px;top:257px" width="32" height="26" viewBox="0 0 32 26"><path d="M0,2 Q0,0 2,0 L11.5,0 L14.5,2.2 L26,2.2 Q28,2.2 28,4.2 L28,24 Q28,26 26,26 L2,26 Q0,26 0,24 Z" fill="#dcab3d"/><path d="M0,6 L11.5,6 L14.5,4.2 L26,4.2 Q28,4.2 28,6.2 L28,24 Q28,26 26,26 L2,26 Q0,26 0,24 Z" fill="#f5c445"/></svg><svg style="position:absolute;left:156px;top:255px" width="30" height="32" viewBox="0 0 30 32"><path d="M11.3,8.5 C11.3,4 14.2,2.2 18,2.2 C22.2,2.2 25.2,4.8 25.2,8.5 C25.2,13.2 17,14.2 17,19 L17,22.5" stroke="#000" stroke-width="3.8" fill="none"/><circle cx="16.8" cy="29" r="2.2" fill="#000"/></svg><div style="position:absolute;left:197px;top:272.70px;font-size:23.7px;font-weight:400;color:#e3e3e3;letter-spacing:0px;line-height:0;white-space:pre;will-change:transform;-webkit-text-stroke-width:0.4px;">0</div><svg style="position:absolute;left:156px;top:295px" width="32" height="26" viewBox="0 0 32 26"><path d="M0,2 Q0,0 2,0 L11.5,0 L14.5,2.2 L26,2.2 Q28,2.2 28,4.2 L28,24 Q28,26 26,26 L2,26 Q0,26 0,24 Z" fill="#dcab3d"/><path d="M0,6 L11.5,6 L14.5,4.2 L26,4.2 Q28,4.2 28,6.2 L28,24 Q28,26 26,26 L2,26 Q0,26 0,24 Z" fill="#f5c445"/></svg><svg style="position:absolute;left:156px;top:293px" width="30" height="32" viewBox="0 0 30 32"><path d="M11.3,8.5 C11.3,4 14.2,2.2 18,2.2 C22.2,2.2 25.2,4.8 25.2,8.5 C25.2,13.2 17,14.2 17,19 L17,22.5" stroke="#000" stroke-width="3.8" fill="none"/><circle cx="16.8" cy="29" r="2.2" fill="#000"/></svg><div style="position:absolute;left:197px;top:310.70px;font-size:23.7px;font-weight:400;color:#e3e3e3;letter-spacing:0px;line-height:0;white-space:pre;will-change:transform;-webkit-text-stroke-width:0.4px;">1</div><svg style="position:absolute;left:156px;top:333px" width="32" height="26" viewBox="0 0 32 26"><path d="M0,2 Q0,0 2,0 L11.5,0 L13.5,2 L26,2 Q28,2 28,4 L28,24 L2,26 Q0,26 0,24 Z" fill="#dcab3d"/><path d="M2.5,14 Q3,12.5 5,12.5 L12,12.5 L15,11.5 L32,11.5 L29,25 Q28.5,26 27,26 L2,26 Q0,26 0,24 Z" fill="#f5c445"/></svg><div style="position:absolute;left:190px;top:329px;width:38px;height:38px;background:#d9d9d9"></div><div style="position:absolute;left:197px;top:348.70px;font-size:23.7px;font-weight:400;color:#ffffff;letter-spacing:0px;line-height:0;white-space:pre;will-change:transform;-webkit-text-stroke-width:0.4px;">10</div><svg style="position:absolute;left:156px;top:371px" width="32" height="26" viewBox="0 0 32 26"><path d="M0,2 Q0,0 2,0 L11.5,0 L14.5,2.2 L26,2.2 Q28,2.2 28,4.2 L28,24 Q28,26 26,26 L2,26 Q0,26 0,24 Z" fill="#dcab3d"/><path d="M0,6 L11.5,6 L14.5,4.2 L26,4.2 Q28,4.2 28,6.2 L28,24 Q28,26 26,26 L2,26 Q0,26 0,24 Z" fill="#f5c445"/></svg><svg style="position:absolute;left:156px;top:369px" width="30" height="32" viewBox="0 0 30 32"><path d="M11.3,8.5 C11.3,4 14.2,2.2 18,2.2 C22.2,2.2 25.2,4.8 25.2,8.5 C25.2,13.2 17,14.2 17,19 L17,22.5" stroke="#000" stroke-width="3.8" fill="none"/><circle cx="16.8" cy="29" r="2.2" fill="#000"/></svg><div style="position:absolute;left:197px;top:386.70px;font-size:23.7px;font-weight:400;color:#e3e3e3;letter-spacing:0px;line-height:0;white-space:pre;will-change:transform;-webkit-text-stroke-width:0.4px;">2</div></div><div style="position:absolute;left:3022px;top:491px;width:28px;height:371px;background:#2a2a2a;border-left:1px solid #3a3a3a;box-sizing:border-box"></div><div style="position:absolute;left:3030px;top:619px;width:16px;height:116px;border-radius:8px;background:#a0a0a0"></div><div style="position:absolute;left:112px;top:872px;width:1469px;height:34px;background:#323232;"></div><div style="position:absolute;left:112px;top:872px;width:1469px;height:1px;background:#3e3e3e;"></div><div style="position:absolute;left:112px;top:901px;width:1469px;height:4px;background:#2a2a2a;"></div><div style="position:absolute;left:112px;top:905px;width:1469px;height:1px;background:#383838;"></div><div style="position:absolute;left:122.7px;top:890.09px;font-size:22.6px;font-weight:400;color:#e3e3e3;letter-spacing:0.3px;line-height:0;white-space:pre;will-change:transform;-webkit-text-stroke-width:0.4px;">Filename</div><svg style="position:absolute;left:232px;top:879px" width="28" height="18" viewBox="0 0 28 18"><path d="M2.2,15.5 L14,3.7 L25.8,15.5" stroke="#c2c2c2" stroke-width="3.4" fill="none"/></svg><div style="position:absolute;left:448px;top:872px;width:3px;height:33px;background:#262626;"></div><div style="position:absolute;left:451px;top:872px;width:2px;height:33px;background:#434343;"></div><div style="position:absolute;right:2567px;top:890.09px;font-size:22.6px;font-weight:400;color:#e3e3e3;letter-spacing:0.3px;line-height:0;white-space:pre;will-change:transform;-webkit-text-stroke-width:0.4px;">Filesize</div><div style="position:absolute;left:607px;top:872px;width:3px;height:33px;background:#262626;"></div><div style="position:absolute;left:610px;top:872px;width:2px;height:33px;background:#434343;"></div><div style="position:absolute;left:623.7px;top:890.09px;font-size:22.6px;font-weight:400;color:#e3e3e3;letter-spacing:0.3px;line-height:0;white-space:pre;will-change:transform;-webkit-text-stroke-width:0.4px;">Filetype</div><div style="position:absolute;left:848px;top:872px;width:3px;height:33px;background:#262626;"></div><div style="position:absolute;left:851px;top:872px;width:2px;height:33px;background:#434343;"></div><div style="position:absolute;left:863.7px;top:890.09px;font-size:22.6px;font-weight:400;color:#e3e3e3;letter-spacing:0.3px;line-height:0;white-space:pre;will-change:transform;-webkit-text-stroke-width:0.4px;">Last modified</div><div style="position:absolute;left:1088px;top:872px;width:3px;height:33px;background:#262626;"></div><div style="position:absolute;left:1091px;top:872px;width:2px;height:33px;background:#434343;"></div><div style="position:absolute;left:1592px;top:872px;width:1458px;height:34px;background:#323232;"></div><div style="position:absolute;left:1592px;top:872px;width:1458px;height:1px;background:#3e3e3e;"></div><div style="position:absolute;left:1592px;top:901px;width:1458px;height:4px;background:#2a2a2a;"></div><div style="position:absolute;left:1592px;top:905px;width:1458px;height:1px;background:#383838;"></div><div style="position:absolute;left:1602.7px;top:890.09px;font-size:22.6px;font-weight:400;color:#e3e3e3;letter-spacing:0.3px;line-height:0;white-space:pre;will-change:transform;-webkit-text-stroke-width:0.4px;">Filename</div><svg style="position:absolute;left:1712px;top:879px" width="28" height="18" viewBox="0 0 28 18"><path d="M2.2,15.5 L14,3.7 L25.8,15.5" stroke="#c2c2c2" stroke-width="3.4" fill="none"/></svg><div style="position:absolute;left:1888px;top:872px;width:3px;height:33px;background:#262626;"></div><div style="position:absolute;left:1891px;top:872px;width:2px;height:33px;background:#434343;"></div><div style="position:absolute;right:1135.6px;top:890.09px;font-size:22.6px;font-weight:400;color:#e3e3e3;letter-spacing:0.3px;line-height:0;white-space:pre;will-change:transform;-webkit-text-stroke-width:0.4px;">Filesize</div><div style="position:absolute;left:2037px;top:872px;width:3px;height:33px;background:#262626;"></div><div style="position:absolute;left:2040px;top:872px;width:2px;height:33px;background:#434343;"></div><div style="position:absolute;left:2053.7px;top:890.09px;font-size:22.6px;font-weight:400;color:#e3e3e3;letter-spacing:0.3px;line-height:0;white-space:pre;will-change:transform;-webkit-text-stroke-width:0.4px;">Filetype</div><div style="position:absolute;left:2198px;top:872px;width:3px;height:33px;background:#262626;"></div><div style="position:absolute;left:2201px;top:872px;width:2px;height:33px;background:#434343;"></div><div style="position:absolute;left:2213.7px;top:890.09px;font-size:22.6px;font-weight:400;color:#e3e3e3;letter-spacing:0.3px;line-height:0;white-space:pre;will-change:transform;-webkit-text-stroke-width:0.4px;">Last modified</div><div style="position:absolute;left:2398px;top:872px;width:3px;height:33px;background:#262626;"></div><div style="position:absolute;left:2401px;top:872px;width:2px;height:33px;background:#434343;"></div><div style="position:absolute;left:2413.7px;top:890.09px;font-size:22.6px;font-weight:400;color:#e3e3e3;letter-spacing:0.3px;line-height:0;white-space:pre;will-change:transform;-webkit-text-stroke-width:0.4px;">Permissions</div><div style="position:absolute;left:2558px;top:872px;width:3px;height:33px;background:#262626;"></div><div style="position:absolute;left:2561px;top:872px;width:2px;height:33px;background:#434343;"></div><div style="position:absolute;left:2573.7px;top:890.09px;font-size:22.6px;font-weight:400;color:#e3e3e3;letter-spacing:0.3px;line-height:0;white-space:pre;will-change:transform;-webkit-text-stroke-width:0.4px;">Owner/Group</div><div style="position:absolute;left:2728px;top:872px;width:3px;height:33px;background:#262626;"></div><div style="position:absolute;left:2731px;top:872px;width:2px;height:33px;background:#434343;"></div><svg style="position:absolute;left:116px;top:914px" width="32" height="26" viewBox="0 0 32 26"><path d="M0,2 Q0,0 2,0 L11.5,0 L14.5,2.2 L26,2.2 Q28,2.2 28,4.2 L28,24 Q28,26 26,26 L2,26 Q0,26 0,24 Z" fill="#dcab3d"/><path d="M0,6 L11.5,6 L14.5,4.2 L26,4.2 Q28,4.2 28,6.2 L28,24 Q28,26 26,26 L2,26 Q0,26 0,24 Z" fill="#f5c445"/></svg><div style="position:absolute;left:159px;top:929.38px;font-size:27.5px;font-weight:400;color:#e5e3e1;letter-spacing:0px;line-height:0;white-space:pre;will-change:transform;-webkit-text-stroke-width:0.4px;">..</div><svg style="position:absolute;left:120px;top:956px" width="26" height="32" viewBox="0 0 26 32"><path d="M0,2 Q0,0 2,0 L18.5,0 L24,5.5 L24,28 Q24,30 22,30 L2,30 Q0,30 0,28 Z" fill="#ffffff"/><path d="M18.5,0 L24,5.5 L20.5,5.5 Q18.5,5.5 18.5,3.5 Z" fill="#dcdcdc"/></svg><div style="position:absolute;left:159px;top:973.38px;font-size:27.5px;font-weight:400;color:#e5e3e1;letter-spacing:0px;line-height:0;white-space:pre;will-change:transform;-webkit-text-stroke-width:0.4px;">config.json</div><div style="position:absolute;right:2567px;top:973.38px;font-size:27.5px;font-weight:400;color:#e5e3e1;letter-spacing:0px;line-height:0;white-space:pre;will-change:transform;-webkit-text-stroke-width:0.4px;">130</div><div style="position:absolute;left:617px;top:973.38px;font-size:27.5px;font-weight:400;color:#e5e3e1;letter-spacing:0px;line-height:0;white-space:pre;will-change:transform;-webkit-text-stroke-width:0.4px;">JSON document</div><div style="position:absolute;left:856px;top:973.38px;font-size:27.5px;font-weight:400;color:#e5e3e1;letter-spacing:0px;line-height:0;white-space:pre;will-change:transform;-webkit-text-stroke-width:0.4px;">12/05/23 22:30:...</div><svg style="position:absolute;left:120px;top:1000px" width="26" height="32" viewBox="0 0 26 32"><path d="M0,2 Q0,0 2,0 L18.5,0 L24,5.5 L24,28 Q24,30 22,30 L2,30 Q0,30 0,28 Z" fill="#ffffff"/><path d="M18.5,0 L24,5.5 L20.5,5.5 Q18.5,5.5 18.5,3.5 Z" fill="#dcdcdc"/></svg><div style="position:absolute;left:159px;top:1017.38px;font-size:27.5px;font-weight:400;color:#e5e3e1;letter-spacing:0px;line-height:0;white-space:pre;will-change:transform;-webkit-text-stroke-width:0.4px;">helper.log</div><div style="position:absolute;right:2567px;top:1017.38px;font-size:27.5px;font-weight:400;color:#e5e3e1;letter-spacing:0px;line-height:0;white-space:pre;will-change:transform;-webkit-text-stroke-width:0.4px;">11818</div><div style="position:absolute;left:617px;top:1017.38px;font-size:27.5px;font-weight:400;color:#e5e3e1;letter-spacing:0px;line-height:0;white-space:pre;will-change:transform;-webkit-text-stroke-width:0.4px;">log-file</div><div style="position:absolute;left:856px;top:1017.38px;font-size:27.5px;font-weight:400;color:#e5e3e1;letter-spacing:0px;line-height:0;white-space:pre;will-change:transform;-webkit-text-stroke-width:0.4px;">12/05/23 22:30:...</div><svg style="position:absolute;left:120px;top:1044px" width="26" height="32" viewBox="0 0 26 32"><path d="M0,2 Q0,0 2,0 L18.5,0 L24,5.5 L24,28 Q24,30 22,30 L2,30 Q0,30 0,28 Z" fill="#ffffff"/><path d="M18.5,0 L24,5.5 L20.5,5.5 Q18.5,5.5 18.5,3.5 Z" fill="#dcdcdc"/></svg><div style="position:absolute;left:159px;top:1061.38px;font-size:27.5px;font-weight:400;color:#e5e3e1;letter-spacing:0px;line-height:0;white-space:pre;will-change:transform;-webkit-text-stroke-width:0.4px;">update.json</div><div style="position:absolute;right:2567px;top:1061.38px;font-size:27.5px;font-weight:400;color:#e5e3e1;letter-spacing:0px;line-height:0;white-space:pre;will-change:transform;-webkit-text-stroke-width:0.4px;">267</div><div style="position:absolute;left:617px;top:1061.38px;font-size:27.5px;font-weight:400;color:#e5e3e1;letter-spacing:0px;line-height:0;white-space:pre;will-change:transform;-webkit-text-stroke-width:0.4px;">JSON document</div><div style="position:absolute;left:856px;top:1061.38px;font-size:27.5px;font-weight:400;color:#e5e3e1;letter-spacing:0px;line-height:0;white-space:pre;will-change:transform;-webkit-text-stroke-width:0.4px;">12/05/23 16:07:20</div><svg style="position:absolute;left:1596px;top:914px" width="32" height="26" viewBox="0 0 32 26"><path d="M0,2 Q0,0 2,0 L11.5,0 L14.5,2.2 L26,2.2 Q28,2.2 28,4.2 L28,24 Q28,26 26,26 L2,26 Q0,26 0,24 Z" fill="#dcab3d"/><path d="M0,6 L11.5,6 L14.5,4.2 L26,4.2 Q28,4.2 28,6.2 L28,24 Q28,26 26,26 L2,26 Q0,26 0,24 Z" fill="#f5c445"/></svg><div style="position:absolute;left:1639px;top:929.38px;font-size:27.5px;font-weight:400;color:#e5e3e1;letter-spacing:0px;line-height:0;white-space:pre;will-change:transform;-webkit-text-stroke-width:0.4px;">..</div><div style="position:absolute;left:1592px;top:994px;width:1139px;height:44px;background:#d8d8d8;"></div><svg style="position:absolute;left:1600px;top:956px" width="26" height="32" viewBox="0 0 26 32"><path d="M0,2 Q0,0 2,0 L18.5,0 L24,5.5 L24,28 Q24,30 22,30 L2,30 Q0,30 0,28 Z" fill="#ffffff"/><path d="M18.5,0 L24,5.5 L20.5,5.5 Q18.5,5.5 18.5,3.5 Z" fill="#dcdcdc"/></svg><div style="position:absolute;left:1637px;top:973.38px;font-size:27.5px;font-weight:400;color:#e5e3e1;letter-spacing:0px;line-height:0;white-space:pre;will-change:transform;-webkit-text-stroke-width:0.4px;">ifc_test.png</div><div style="position:absolute;right:1137px;top:973.38px;font-size:27.5px;font-weight:400;color:#e5e3e1;letter-spacing:0px;line-height:0;white-space:pre;will-change:transform;-webkit-text-stroke-width:0.4px;">2095</div><div style="position:absolute;left:2045.7px;top:973.38px;font-size:27.5px;font-weight:400;color:#e5e3e1;letter-spacing:0px;line-height:0;white-space:pre;will-change:transform;-webkit-text-stroke-width:0.4px;">png-file</div><div style="position:absolute;left:2206px;top:973.38px;font-size:27.5px;font-weight:400;color:#e5e3e1;letter-spacing:0px;line-height:0;white-space:pre;will-change:transform;-webkit-text-stroke-width:0.4px;">12/20/23 12:4..</div><div style="position:absolute;left:2405.5px;top:973.38px;font-size:27.5px;font-weight:400;color:#e5e3e1;letter-spacing:0px;line-height:0;white-space:pre;will-change:transform;-webkit-text-stroke-width:0.4px;">adfrw (06...</div><div style="position:absolute;left:2565.6px;top:973.38px;font-size:27.5px;font-weight:400;color:#e5e3e1;letter-spacing:0px;line-height:0;white-space:pre;will-change:transform;-webkit-text-stroke-width:0.4px;">aaron@clasif</div><svg style="position:absolute;left:1600px;top:1000px" width="26" height="32" viewBox="0 0 26 32"><path d="M0,2 Q0,0 2,0 L18.5,0 L24,5.5 L24,28 Q24,30 22,30 L2,30 Q0,30 0,28 Z" fill="#ffffff"/><path d="M18.5,0 L24,5.5 L20.5,5.5 Q18.5,5.5 18.5,3.5 Z" fill="#dcdcdc"/></svg><div style="position:absolute;left:1637px;top:1017.38px;font-size:27.5px;font-weight:400;color:#0a0a0a;letter-spacing:0px;line-height:0;white-space:pre;will-change:transform;-webkit-text-stroke-width:0.4px;">ife_test.png</div><div style="position:absolute;right:1137px;top:1017.38px;font-size:27.5px;font-weight:400;color:#0a0a0a;letter-spacing:0px;line-height:0;white-space:pre;will-change:transform;-webkit-text-stroke-width:0.4px;">38190</div><div style="position:absolute;left:2045.7px;top:1017.38px;font-size:27.5px;font-weight:400;color:#0a0a0a;letter-spacing:0px;line-height:0;white-space:pre;will-change:transform;-webkit-text-stroke-width:0.4px;">png-file</div><div style="position:absolute;left:2206px;top:1017.38px;font-size:27.5px;font-weight:400;color:#0a0a0a;letter-spacing:0px;line-height:0;white-space:pre;will-change:transform;-webkit-text-stroke-width:0.4px;">12/20/23 12:4..</div><div style="position:absolute;left:2405.5px;top:1017.38px;font-size:27.5px;font-weight:400;color:#0a0a0a;letter-spacing:0px;line-height:0;white-space:pre;will-change:transform;-webkit-text-stroke-width:0.4px;">adfrw (06...</div><div style="position:absolute;left:2565.6px;top:1017.38px;font-size:27.5px;font-weight:400;color:#0a0a0a;letter-spacing:0px;line-height:0;white-space:pre;will-change:transform;-webkit-text-stroke-width:0.4px;">aaron@clasif</div><div style="position:absolute;left:122px;top:1543.52px;font-size:27.1px;font-weight:400;color:#e5e3e1;letter-spacing:0px;line-height:0;white-space:pre;will-change:transform;-webkit-text-stroke-width:0.4px;">3 files. Total size: 12215 bytes</div><div style="position:absolute;left:1602px;top:1543.48px;font-size:27.2px;font-weight:400;color:#e5e3e1;letter-spacing:0px;line-height:0;white-space:pre;will-change:transform;-webkit-text-stroke-width:0.4px;">Selected 1 file. Total size: 38190 bytes</div><div style="position:absolute;left:112px;top:1574px;width:2938px;height:34px;background:#323232;"></div><div style="position:absolute;left:112px;top:1574px;width:2938px;height:1px;background:#3e3e3e;"></div><div style="position:absolute;left:112px;top:1603px;width:2938px;height:4px;background:#2a2a2a;"></div><div style="position:absolute;left:112px;top:1607px;width:2938px;height:1px;background:#383838;"></div><div style="position:absolute;left:122.7px;top:1592.09px;font-size:22.6px;font-weight:400;color:#e3e3e3;letter-spacing:0.3px;line-height:0;white-space:pre;will-change:transform;-webkit-text-stroke-width:0.4px;">Server/Local file</div><div style="position:absolute;left:468px;top:1574px;width:3px;height:33px;background:#262626;"></div><div style="position:absolute;left:471px;top:1574px;width:2px;height:33px;background:#434343;"></div><div style="position:absolute;left:483.7px;top:1592.09px;font-size:22.6px;font-weight:400;color:#e3e3e3;letter-spacing:0.3px;line-height:0;white-space:pre;will-change:transform;-webkit-text-stroke-width:0.4px;">Direction</div><div style="position:absolute;left:589px;top:1574px;width:3px;height:33px;background:#262626;"></div><div style="position:absolute;left:592px;top:1574px;width:2px;height:33px;background:#434343;"></div><div style="position:absolute;left:603.7px;top:1592.09px;font-size:22.6px;font-weight:400;color:#e3e3e3;letter-spacing:0.3px;line-height:0;white-space:pre;will-change:transform;-webkit-text-stroke-width:0.4px;">Remote file</div><div style="position:absolute;left:948px;top:1574px;width:3px;height:33px;background:#262626;"></div><div style="position:absolute;left:951px;top:1574px;width:2px;height:33px;background:#434343;"></div><div style="position:absolute;right:2067px;top:1592.09px;font-size:22.6px;font-weight:400;color:#e3e3e3;letter-spacing:0.3px;line-height:0;white-space:pre;will-change:transform;-webkit-text-stroke-width:0.4px;">Size</div><div style="position:absolute;left:1108px;top:1574px;width:3px;height:33px;background:#262626;"></div><div style="position:absolute;left:1111px;top:1574px;width:2px;height:33px;background:#434343;"></div><div style="position:absolute;left:1123.7px;top:1592.09px;font-size:22.6px;font-weight:400;color:#e3e3e3;letter-spacing:0.3px;line-height:0;white-space:pre;will-change:transform;-webkit-text-stroke-width:0.4px;">Priority</div><div style="position:absolute;left:1228px;top:1574px;width:3px;height:33px;background:#262626;"></div><div style="position:absolute;left:1231px;top:1574px;width:2px;height:33px;background:#434343;"></div><div style="position:absolute;left:1243.7px;top:1592.09px;font-size:22.6px;font-weight:400;color:#e3e3e3;letter-spacing:0.3px;line-height:0;white-space:pre;will-change:transform;-webkit-text-stroke-width:0.4px;">Status</div><div style="position:absolute;left:1528px;top:1574px;width:3px;height:33px;background:#262626;"></div><div style="position:absolute;left:1531px;top:1574px;width:2px;height:33px;background:#434343;"></div><div style="position:absolute;left:123px;top:1784px;width:233px;height:41px;background:#1e1e1e;border:1px solid #171717;border-radius:0 0 6px 6px;border-top:1px solid #8a8a8a;"></div><div style="position:absolute;left:139px;top:1802.62px;font-size:26.8px;font-weight:700;color:#e5e3e1;letter-spacing:0px;line-height:0;white-space:pre;will-change:transform;-webkit-text-stroke-width:0.15px;">Queued files</div><div style="position:absolute;left:359px;top:1784px;width:231px;height:41px;background:linear-gradient(#1e1e1e,#262626);border:1px solid #171717;border-radius:0 0 6px 6px;border-top:3px solid #333;height:39px;"></div><div style="position:absolute;left:373px;top:1803.38px;font-size:27.5px;font-weight:400;color:#e5e3e1;letter-spacing:0px;line-height:0;white-space:pre;will-change:transform;-webkit-text-stroke-width:0.4px;">Failed transfers</div><div style="position:absolute;left:593px;top:1784px;width:339px;height:41px;background:linear-gradient(#1e1e1e,#262626);border:1px solid #171717;border-radius:0 0 6px 6px;border-top:3px solid #333;height:39px;"></div><div style="position:absolute;left:607px;top:1803.38px;font-size:27.5px;font-weight:400;color:#e5e3e1;letter-spacing:0px;line-height:0;white-space:pre;will-change:transform;-webkit-text-stroke-width:0.4px;">Successful transfers (1)</div><div style="position:absolute;left:2732px;top:1861.85px;font-size:23.3px;font-weight:400;color:#a3a3a3;letter-spacing:0px;line-height:0;white-space:pre;will-change:transform;-webkit-text-stroke-width:0.4px;">Queue: empty</div><svg style="position:absolute;left:2640px;top:1846px" width="30" height="30" viewBox="0 0 30 30"><g transform="translate(15,15)"><path d="M-3.53,-14.17 L3.53,-14.17 L3.83,-10.52 L7.20,-8.58 L10.50,-10.14 L14.03,-4.02 L11.03,-1.94 L11.03,1.94 L14.03,4.02 L10.50,10.14 L7.20,8.58 L3.83,10.52 L3.53,14.17 L-3.53,14.17 L-3.83,10.52 L-7.20,8.58 L-10.50,10.14 L-14.03,4.02 L-11.03,1.94 L-11.03,-1.94 L-14.03,-4.02 L-10.50,-10.14 L-7.20,-8.58 L-3.83,-10.52 Z" fill="#5c5c5c"/><circle r="11.6" fill="#555"/><circle r="9.1" fill="#fff"/><path d="M-5.8,5.6 L-2,-5.5 L2,-5.5 L5.8,5.6 L2.9,5.6 L2.1,3.1 L-2.1,3.1 L-2.9,5.6 Z M-1.3,0.7 L1.3,0.7 L0,-3 Z" fill="#45b935" fill-rule="evenodd"/></g></svg><svg style="position:absolute;left:2678px;top:1846px" width="30" height="30" viewBox="0 0 30 30"><g transform="translate(15,15)"><circle r="14" fill="#4a4a4a"/><circle r="12.6" fill="#fff"/><path d="M-6.4,6.4 A9,9 0 1 1 6.4,6.4" stroke="#8a8a8a" stroke-width="3.6" fill="none"/><path d="M4,-8 A9,9 0 0 1 6.4,6.4" stroke="#555" stroke-width="3.6" fill="none"/><path d="M0,0 L7,-7" stroke="#444" stroke-width="2.6"/><circle r="2.4" fill="#444"/><circle r="0.9" fill="#ddd"/></g></svg><div style="position:absolute;left:2984px;top:1850px;width:20px;height:20px;border-radius:50%;border:2px solid #8f8d8f;background:radial-gradient(ellipse 70% 45% at 50% 30%, #b8dcb0 0%, #3f8a35 75%, #1a4d12 100%), #1a4d12"></div><div style="position:absolute;left:3014px;top:1850px;width:20px;height:20px;border-radius:50%;border:2px solid #8f9494;background:radial-gradient(ellipse 70% 45% at 50% 30%, #dcb0ae 0%, #8a2a22 75%, #4a0604 100%), #4a0604"></div><svg style="position:absolute;left:124px;top:132px" width="60" height="60" viewBox="0 0 60 60"><rect x="0" y="0" width="10" height="30" fill="#fff"/><rect x="10" y="0" width="10" height="30" fill="#e4e4e4"/><rect x="4" y="4" width="12" height="2" fill="#2f66c5"/><rect x="4" y="8" width="12" height="2" fill="#2f66c5"/><circle cx="10" cy="25" r="1.6" fill="#555"/><rect x="9" y="30" width="2" height="8" fill="#6a6a6a"/><rect x="0" y="37" width="20" height="2" fill="#6a6a6a"/><rect x="8" y="36" width="4" height="4" fill="#5fcf45"/><rect x="20" y="4" width="10" height="30" fill="#fff"/><rect x="30" y="4" width="10" height="30" fill="#e4e4e4"/><rect x="24" y="8" width="12" height="2" fill="#2f66c5"/><rect x="24" y="12" width="12" height="2" fill="#2f66c5"/><circle cx="30" cy="29" r="1.6" fill="#555"/><rect x="29" y="34" width="2" height="8" fill="#6a6a6a"/><rect x="20" y="41" width="20" height="2" fill="#6a6a6a"/><rect x="28" y="40" width="4" height="4" fill="#5fcf45"/><rect x="40" y="0" width="10" height="30" fill="#fff"/><rect x="50" y="0" width="10" height="30" fill="#e4e4e4"/><rect x="44" y="4" width="12" height="2" fill="#2f66c5"/><rect x="44" y="8" width="12" height="2" fill="#2f66c5"/><circle cx="50" cy="25" r="1.6" fill="#555"/><rect x="49" y="30" width="2" height="8" fill="#6a6a6a"/><rect x="40" y="37" width="20" height="2" fill="#6a6a6a"/><rect x="48" y="36" width="4" height="4" fill="#5fcf45"/><rect x="8" y="46" width="4" height="10" fill="#6a6a6a"/><rect x="28" y="46" width="4" height="10" fill="#6a6a6a"/><rect x="48" y="46" width="4" height="10" fill="#6a6a6a"/><rect x="0" y="56" width="60" height="4" fill="#6a6a6a"/></svg><svg style="position:absolute;left:264px;top:132px" width="64" height="64" viewBox="0 0 64 64"><rect x="0" y="0" width="64" height="64" rx="4" fill="#bababa"/><path d="M12,4 L60,4 L60,60 Q60,64 56,64 L12,64 Z" fill="#a9a9a9"/><path d="M8,4 Q8,0 12,0 L44,0 L56,12 L56,56 Q56,60 52,60 L12,60 Q8,60 8,56 Z" fill="#e6e6e6"/><path d="M44,0 L56,12 L48,12 Q44,12 44,8 Z" fill="#ffffff"/><rect x="16" y="8" width="20" height="4" rx="2.0" fill="#666666"/><rect x="16" y="16" width="12" height="4" rx="2.0" fill="#3a7bd5"/><rect x="32" y="16" width="12" height="4" rx="2.0" fill="#62cc48"/><rect x="16" y="24" width="16" height="4" rx="2.0" fill="#3a7bd5"/><rect x="36" y="24" width="12" height="4" rx="2.0" fill="#666666"/><rect x="16" y="32" width="8" height="4" rx="2.0" fill="#62cc48"/><rect x="28" y="32" width="16" height="4" rx="2.0" fill="#666666"/><rect x="16" y="40" width="28" height="4" rx="2.0" fill="#3a7bd5"/><rect x="16" y="48" width="20" height="4" rx="2.0" fill="#666666"/><rect x="40" y="48" width="8" height="4" rx="2.0" fill="#62cc48"/></svg><svg style="position:absolute;left:344px;top:132px" width="64" height="64" viewBox="0 0 64 64"><rect x="0" y="0" width="64" height="64" rx="4" fill="#bababa"/><path d="M4,8 L64,8 L64,56 Q64,60 60,60 L8,60 Q4,60 4,56 Z" fill="#a9a9a9"/><path d="M0,8 Q0,4 4,4 L56,4 Q60,4 60,8 L60,12 L0,12 Z" fill="#666"/><rect x="2.5" y="6.5" width="13" height="3.2" rx="1.6" fill="#e6e6e6"/><circle cx="47" cy="8" r="1.6" fill="#fff"/><circle cx="51.5" cy="8" r="1.6" fill="#fff"/><circle cx="56" cy="8" r="1.6" fill="#fff"/><path d="M0,12 L60,12 L60,52 Q60,56 56,56 L4,56 Q0,56 0,52 Z" fill="#ffffff"/><rect x="0" y="12" width="28" height="12" fill="#62cc48"/><path d="M0,28 L28,28 L28,56 L4,56 Q0,56 0,52 Z" fill="#d2e3cf"/><path d="M32,12 L60,12 L60,52 Q60,56 56,56 L32,56 Z" fill="#e6e6e6"/></svg><svg style="position:absolute;left:424px;top:132px" width="64" height="64" viewBox="0 0 64 64"><rect x="0" y="0" width="64" height="64" rx="4" fill="#bababa"/><path d="M4,8 L64,8 L64,56 Q64,60 60,60 L8,60 Q4,60 4,56 Z" fill="#a9a9a9"/><path d="M0,8 Q0,4 4,4 L56,4 Q60,4 60,8 L60,12 L0,12 Z" fill="#666"/><rect x="2.5" y="6.5" width="13" height="3.2" rx="1.6" fill="#e6e6e6"/><circle cx="47" cy="8" r="1.6" fill="#fff"/><circle cx="51.5" cy="8" r="1.6" fill="#fff"/><circle cx="56" cy="8" r="1.6" fill="#fff"/><path d="M0,12 L60,12 L60,52 Q60,56 56,56 L4,56 Q0,56 0,52 Z" fill="#ffffff"/><path d="M0,12 L28,12 L28,56 L4,56 Q0,56 0,52 Z" fill="#e6e6e6"/><rect x="32" y="12" width="28" height="12" fill="#3a7bd5"/><path d="M32,28 L60,28 L60,52 Q60,56 56,56 L32,56 Z" fill="#cbd6e2"/></svg><svg style="position:absolute;left:504px;top:132px" width="64" height="64" viewBox="0 0 64 64"><rect x="0" y="0" width="64" height="64" rx="4" fill="#bababa"/><path d="M4,12 L50,12 L50,4 L64,18 L50,32 L50,24 L4,24 Z" fill="#a9a9a9"/><path d="M18,44 L64,44 L64,56 L18,56 L18,64 L4,50 L18,36 Z" fill="#a9a9a9"/><path d="M26,0 L40,14 L26,28 Z" fill="#55b33e"/><path d="M0,8 L46,8 L46,0 L60,14 L46,28 L46,20 L0,20 Z" fill="#62cc48"/><path d="M34,32 L20,46 L34,60 Z" fill="#2f66c5"/><path d="M14,40 L60,40 L60,52 L14,52 L14,60 L0,46 L14,32 Z" fill="#3a7bd5"/></svg><svg style="position:absolute;left:640px;top:132px" width="64" height="64" viewBox="0 0 64 64"><g transform="translate(4,4)" fill="#342c2a"><path d="M3.9,28 C3.9,12 15,0 30,0 C40,0 48,4 55.4,11.4 L63.8,3.5 L63.8,28 L39.5,28 L46.5,20.3 C41,15 35,12 29,12 C21.5,12 16.1,18 16.1,28 Z"/><path d="M3.9,28 C3.9,12 15,0 30,0 C40,0 48,4 55.4,11.4 L63.8,3.5 L63.8,28 L39.5,28 L46.5,20.3 C41,15 35,12 29,12 C21.5,12 16.1,18 16.1,28 Z" transform="rotate(180 33.85 30)"/></g><path d="M3.9,28 C3.9,12 15,0 30,0 C40,0 48,4 55.4,11.4 L63.8,3.5 L63.8,28 L39.5,28 L46.5,20.3 C41,15 35,12 29,12 C21.5,12 16.1,18 16.1,28 Z" fill="#3b7dd6"/><path d="M3.9,28 L4.3,25 C6,17 13.5,11.3 26,11 C35,10.8 42,12.8 47,15 L47,20.8 L46.5,20.3 C41,15 35,12 29,12 C21.5,12 16.1,18 16.1,28 Z M47,5.5 L55.4,11.4 L47,19.8 Z" fill="#3268c0"/><g transform="rotate(180 33.85 30)"><path d="M3.9,28 C3.9,12 15,0 30,0 C40,0 48,4 55.4,11.4 L63.8,3.5 L63.8,28 L39.5,28 L46.5,20.3 C41,15 35,12 29,12 C21.5,12 16.1,18 16.1,28 Z" fill="#64cd4a"/><path d="M3.9,28 L4.3,25 C6,17 13.5,11.3 26,11 C35,10.8 42,12.8 47,15 L47,20.8 L46.5,20.3 C41,15 35,12 29,12 C21.5,12 16.1,18 16.1,28 Z M47,5.5 L55.4,11.4 L47,19.8 Z" fill="#5ab540"/></g></svg><svg style="position:absolute;left:720px;top:132px" width="64" height="64" viewBox="0 0 64 64"><g transform="translate(4,4)" fill="#342c2a"><path d="M14,0 L24,10 L18,10 L18,60 L10,60 L10,10 L4,10 Z"/><path d="M26,0 L34,0 L34,50 L40,50 L30,60 L20,50 L26,50 Z"/></g><defs><clipPath id="gc5021"><rect x="50" y="0" width="64" height="64"/></clipPath></defs><path d="M63.73,18.27 L63.73,23.73 L60.05,24.05 L59.26,25.95 L61.64,28.78 L57.78,32.64 L54.95,30.26 L53.05,31.05 L52.73,34.73 L47.27,34.73 L46.95,31.05 L45.05,30.26 L42.22,32.64 L38.36,28.78 L40.74,25.95 L39.95,24.05 L36.27,23.73 L36.27,18.27 L39.95,17.95 L40.74,16.05 L38.36,13.22 L42.22,9.36 L45.05,11.74 L46.95,10.95 L47.27,7.27 L52.73,7.27 L53.05,10.95 L54.95,11.74 L57.78,9.36 L61.64,13.22 L59.26,16.05 L60.05,17.95 Z" fill="#6b6b6b"/><path d="M63.73,18.27 L63.73,23.73 L60.05,24.05 L59.26,25.95 L61.64,28.78 L57.78,32.64 L54.95,30.26 L53.05,31.05 L52.73,34.73 L47.27,34.73 L46.95,31.05 L45.05,30.26 L42.22,32.64 L38.36,28.78 L40.74,25.95 L39.95,24.05 L36.27,23.73 L36.27,18.27 L39.95,17.95 L40.74,16.05 L38.36,13.22 L42.22,9.36 L45.05,11.74 L46.95,10.95 L47.27,7.27 L52.73,7.27 L53.05,10.95 L54.95,11.74 L57.78,9.36 L61.64,13.22 L59.26,16.05 L60.05,17.95 Z" fill="#555555" clip-path="url(#gc5021)"/><circle cx="50" cy="21" r="4" fill="#3f3634"/><defs><clipPath id="gc5544"><rect x="55" y="0" width="64" height="64"/></clipPath></defs><path d="M64.32,42.15 L64.32,45.85 L61.70,46.03 L61.17,47.30 L62.90,49.28 L60.28,51.90 L58.30,50.17 L57.03,50.70 L56.85,53.32 L53.15,53.32 L52.97,50.70 L51.70,50.17 L49.72,51.90 L47.10,49.28 L48.83,47.30 L48.30,46.03 L45.68,45.85 L45.68,42.15 L48.30,41.97 L48.83,40.70 L47.10,38.72 L49.72,36.10 L51.70,37.83 L52.97,37.30 L53.15,34.68 L56.85,34.68 L57.03,37.30 L58.30,37.83 L60.28,36.10 L62.90,38.72 L61.17,40.70 L61.70,41.97 Z" fill="#6b6b6b"/><path d="M64.32,42.15 L64.32,45.85 L61.70,46.03 L61.17,47.30 L62.90,49.28 L60.28,51.90 L58.30,50.17 L57.03,50.70 L56.85,53.32 L53.15,53.32 L52.97,50.70 L51.70,50.17 L49.72,51.90 L47.10,49.28 L48.83,47.30 L48.30,46.03 L45.68,45.85 L45.68,42.15 L48.30,41.97 L48.83,40.70 L47.10,38.72 L49.72,36.10 L51.70,37.83 L52.97,37.30 L53.15,34.68 L56.85,34.68 L57.03,37.30 L58.30,37.83 L60.28,36.10 L62.90,38.72 L61.17,40.70 L61.70,41.97 Z" fill="#555555" clip-path="url(#gc5544)"/><circle cx="55" cy="44" r="3" fill="#3f3634"/><path d="M14,14 L24,24 L4,24 Z" fill="#55b33e"/><path d="M14,0 L24,10 L18,10 L18,60 L10,60 L10,10 L4,10 Z" fill="#62cc48"/><path d="M20,36 L40,36 L30,46 Z" fill="#2f66c5"/><path d="M26,0 L34,0 L34,50 L40,50 L30,60 L20,50 L26,50 Z" fill="#3a7bd5"/></svg><svg style="position:absolute;left:800px;top:132px" width="64" height="64" viewBox="0 0 64 64"><circle cx="36" cy="32" r="30" fill="#342c2a" opacity="0.5"/><circle cx="34" cy="30" r="30" fill="#5a2f30"/><path d="M12.8,51.2 A30,30 0 0 1 55.2,8.8 Z" fill="#6e3733"/><path d="M23.8,19.8 L44.2,40.2 M44.2,19.8 L23.8,40.2" stroke="#8e8a88" stroke-width="7.2" stroke-linecap="butt"/><path d="M34,30 L44.2,40.2 M23.8,40.2 L34,30" stroke="#86827f" stroke-width="7.2" stroke-linecap="butt"/></svg><svg style="position:absolute;left:880px;top:132px" width="64" height="64" viewBox="0 0 64 64"><rect x="8" y="4" width="40" height="60" fill="#342c2a"/><rect x="4" y="0" width="40" height="60" rx="2" fill="#ffffff"/><path d="M24,0 L42,0 Q44,0 44,2 L44,58 Q44,60 42,60 L24,60 Z" fill="#e4e4e4"/><rect x="12" y="8" width="24" height="4" rx="2" fill="#3a7bd5"/><rect x="24" y="8" width="12" height="4" rx="2" fill="#2f66c5"/><rect x="24" y="8" width="4" height="4" fill="#2f66c5"/><rect x="12" y="16" width="24" height="4" rx="2" fill="#3a7bd5"/><rect x="24" y="16" width="12" height="4" rx="2" fill="#2f66c5"/><rect x="24" y="16" width="4" height="4" fill="#2f66c5"/><circle cx="24" cy="50" r="3" fill="#555"/><path d="M40.7,36.7 L61.3,57.3 M61.3,36.7 L40.7,57.3" stroke="#342c2a" stroke-width="7.5" transform="translate(4,4)"/><path d="M40.7,36.7 L61.3,57.3 M61.3,36.7 L40.7,57.3" stroke="#b23030" stroke-width="7.5"/><path d="M51,47 L61.3,57.3 M40.7,57.3 L51,47" stroke="#8e2626" stroke-width="7.5"/></svg><svg style="position:absolute;left:960px;top:132px" width="64" height="64" viewBox="0 0 64 64"><rect x="8" y="4" width="40" height="60" fill="#342c2a"/><rect x="4" y="0" width="40" height="60" rx="2" fill="#8e8a88"/><path d="M24,0 L42,0 Q44,0 44,2 L44,58 Q44,60 42,60 L24,60 Z" fill="#827d7b"/><rect x="12" y="8" width="24" height="4" rx="2" fill="#3f5a82"/><rect x="24" y="8" width="12" height="4" rx="2" fill="#3a4f70"/><rect x="24" y="8" width="4" height="4" fill="#3a4f70"/><rect x="12" y="16" width="24" height="4" rx="2" fill="#3f5a82"/><rect x="24" y="16" width="12" height="4" rx="2" fill="#3a4f70"/><rect x="24" y="16" width="4" height="4" fill="#3a4f70"/><circle cx="24" cy="50" r="3" fill="#555"/><path d="M34.5,47 L42,54.5 L61,35.5" stroke="#342c2a" stroke-width="8" fill="none" transform="translate(3,3)" opacity="0.6"/><path d="M34.5,47 L42,54.5 L61,35.5" stroke="#4a6e3c" stroke-width="8" fill="none"/><path d="M34.5,47 L42,54.5" stroke="#4f7a40" stroke-width="8" fill="none"/></svg><svg style="position:absolute;left:1100px;top:132px" width="64" height="64" viewBox="0 0 64 64"><rect x="8" y="12" width="60" height="44" rx="4" fill="#342c2a"/><rect x="4" y="8" width="60" height="44" rx="4" fill="#fff"/><path d="M4,12 Q4,8 8,8 L60,8 Q64,8 64,12 L64,16 L4,16 Z" fill="#666"/><circle cx="60" cy="12" r="1.8" fill="#fff"/><rect x="32" y="16" width="4" height="36" fill="#666"/><rect x="8" y="20" width="52" height="4" rx="2.0" fill="#3a7bd5"/><rect x="8" y="28" width="26" height="4" rx="2.0" fill="#b02f2f"/><rect x="8" y="36" width="52" height="4" rx="2.0" fill="#55b33e"/><rect x="8" y="44" width="26" height="4" rx="2.0" fill="#f4c040"/><rect x="32" y="16" width="4" height="36" fill="#666"/></svg><svg style="position:absolute;left:1180px;top:132px" width="64" height="64" viewBox="0 0 64 64"><rect x="40" y="4" width="28" height="28" fill="#342c2a"/><rect x="8" y="36" width="28" height="28" fill="#342c2a"/><path d="M36,0 L60,0 Q64,0 64,4 L64,28 L36,28 Z" fill="#fff"/><path d="M4,32 L32,32 L32,60 L8,60 Q4,60 4,56 Z" fill="#fff"/><rect x="40" y="4" width="12" height="4" rx="2.0" fill="#b02f2f"/><rect x="40" y="12" width="20" height="4" rx="2.0" fill="#f4c040"/><rect x="40" y="20" width="16" height="4" rx="2.0" fill="#55b33e"/><rect x="8" y="36" width="12" height="4" rx="2.0" fill="#f4c040"/><rect x="8" y="44" width="20" height="4" rx="2.0" fill="#55b33e"/><rect x="8" y="52" width="12" height="4" rx="2.0" fill="#b02f2f"/><path d="M46,43 L58,55" stroke="#342c2a" stroke-width="8" stroke-linecap="round" transform="translate(3,3)"/><circle cx="37" cy="33" r="20" fill="#342c2a"/><path d="M46,43 L61.5,58.5" stroke="#4d4d4d" stroke-width="8.6" stroke-linecap="butt"/><circle cx="34" cy="30" r="18" fill="#e6e6e6" stroke="#666" stroke-width="4"/><path d="M23,31 A11,11 0 0 1 34,21" stroke="#fff" stroke-width="3" fill="none" stroke-linecap="round"/></svg><svg style="position:absolute;left:1260px;top:132px" width="64" height="64" viewBox="0 0 64 64"><rect x="40" y="4" width="28" height="28" fill="#342c2a"/><rect x="8" y="36" width="28" height="28" fill="#342c2a"/><path d="M36,0 L60,0 Q64,0 64,4 L64,28 L36,28 Z" fill="#fff"/><path d="M4,32 L32,32 L32,60 L8,60 Q4,60 4,56 Z" fill="#fff"/><rect x="40" y="4" width="12" height="4" rx="2.0" fill="#e2e2e2"/><rect x="40" y="12" width="20" height="4" rx="2.0" fill="#e2e2e2"/><rect x="40" y="20" width="16" height="4" rx="2.0" fill="#e2e2e2"/><rect x="8" y="36" width="12" height="4" rx="2.0" fill="#e2e2e2"/><rect x="8" y="44" width="20" height="4" rx="2.0" fill="#e2e2e2"/><rect x="8" y="52" width="12" height="4" rx="2.0" fill="#e2e2e2"/><g fill="#342c2a"><circle cx="33.7" cy="29.8" r="13"/><g transform="translate(2,2)" opacity="0.7"><path d="M3.9,28 C3.9,12 15,0 30,0 C40,0 48,4 55.4,11.4 L63.8,3.5 L63.8,28 L39.5,28 L46.5,20.3 C41,15 35,12 29,12 C21.5,12 16.1,18 16.1,28 Z" transform="matrix(0.621,0,0,0.621,12.68,11.31)"/><path d="M3.9,28 C3.9,12 15,0 30,0 C40,0 48,4 55.4,11.4 L63.8,3.5 L63.8,28 L39.5,28 L46.5,20.3 C41,15 35,12 29,12 C21.5,12 16.1,18 16.1,28 Z" transform="rotate(180 33.7 29.8) matrix(0.621,0,0,0.621,12.68,11.31)"/></g><rect x="15" y="28" width="38" height="4"/></g><g transform="matrix(0.621,0,0,0.621,12.68,11.31)"><path d="M3.9,28 C3.9,12 15,0 30,0 C40,0 48,4 55.4,11.4 L63.8,3.5 L63.8,28 L39.5,28 L46.5,20.3 C41,15 35,12 29,12 C21.5,12 16.1,18 16.1,28 Z" fill="#64cd4a"/><path d="M3.9,28 L4.3,25 C6,17 13.5,11.3 26,11 C35,10.8 42,12.8 47,15 L47,20.8 L46.5,20.3 C41,15 35,12 29,12 C21.5,12 16.1,18 16.1,28 Z M47,5.5 L55.4,11.4 L47,19.8 Z" fill="#5ab540"/></g><g transform="rotate(180 33.7 29.8) matrix(0.621,0,0,0.621,12.68,11.31)"><path d="M3.9,28 C3.9,12 15,0 30,0 C40,0 48,4 55.4,11.4 L63.8,3.5 L63.8,28 L39.5,28 L46.5,20.3 C41,15 35,12 29,12 C21.5,12 16.1,18 16.1,28 Z" fill="#f4c242"/><path d="M3.9,28 L4.3,25 C6,17 13.5,11.3 26,11 C35,10.8 42,12.8 47,15 L47,20.8 L46.5,20.3 C41,15 35,12 29,12 C21.5,12 16.1,18 16.1,28 Z M47,5.5 L55.4,11.4 L47,19.8 Z" fill="#ddae3e"/></g></svg><svg style="position:absolute;left:1340px;top:132px" width="64" height="64" viewBox="0 0 64 64"><g transform="translate(3,3)" fill="#342c2a"><circle cx="18" cy="42" r="14"/><circle cx="50" cy="42" r="14"/><path d="M13,12 L30,12 L32,42 L4,42 Z"/><path d="M38,12 L55,12 L64,42 L36,42 Z"/></g><rect x="20" y="4" width="11" height="16" rx="5.5" fill="#4a4a4a"/><rect x="36.5" y="4" width="11" height="16" rx="5.5" fill="#4a4a4a"/><path d="M14,16 Q16,11 22,11 L25,11 Q30,11 31,18 L37,16 Q38,11 43,11 L46,11 Q52,11 54,16 L63,40 L5,40 Z" fill="#666"/><circle cx="18" cy="42" r="14" fill="#666"/><circle cx="50" cy="42" r="14" fill="#666"/><rect x="29" y="18" width="10" height="22" fill="#666"/><circle cx="18" cy="42" r="10" fill="#f4c040"/><circle cx="50" cy="42" r="10" fill="#f4c040"/><path d="M13.3,43.3 A5.6,5.6 0 0 1 18.6,37.8" stroke="#fff" stroke-width="3.4" fill="none" stroke-linecap="round"/><path d="M45.3,43.3 A5.6,5.6 0 0 1 50.6,37.8" stroke="#fff" stroke-width="3.4" fill="none" stroke-linecap="round"/><circle cx="34" cy="34" r="2" fill="#ddd"/></svg></div><div style="position:absolute;left:112px;top:76px;width:2936px;height:1810px;border:2px solid rgba(255,255,255,0.23);border-radius:20px;"></div>
</body></html>
